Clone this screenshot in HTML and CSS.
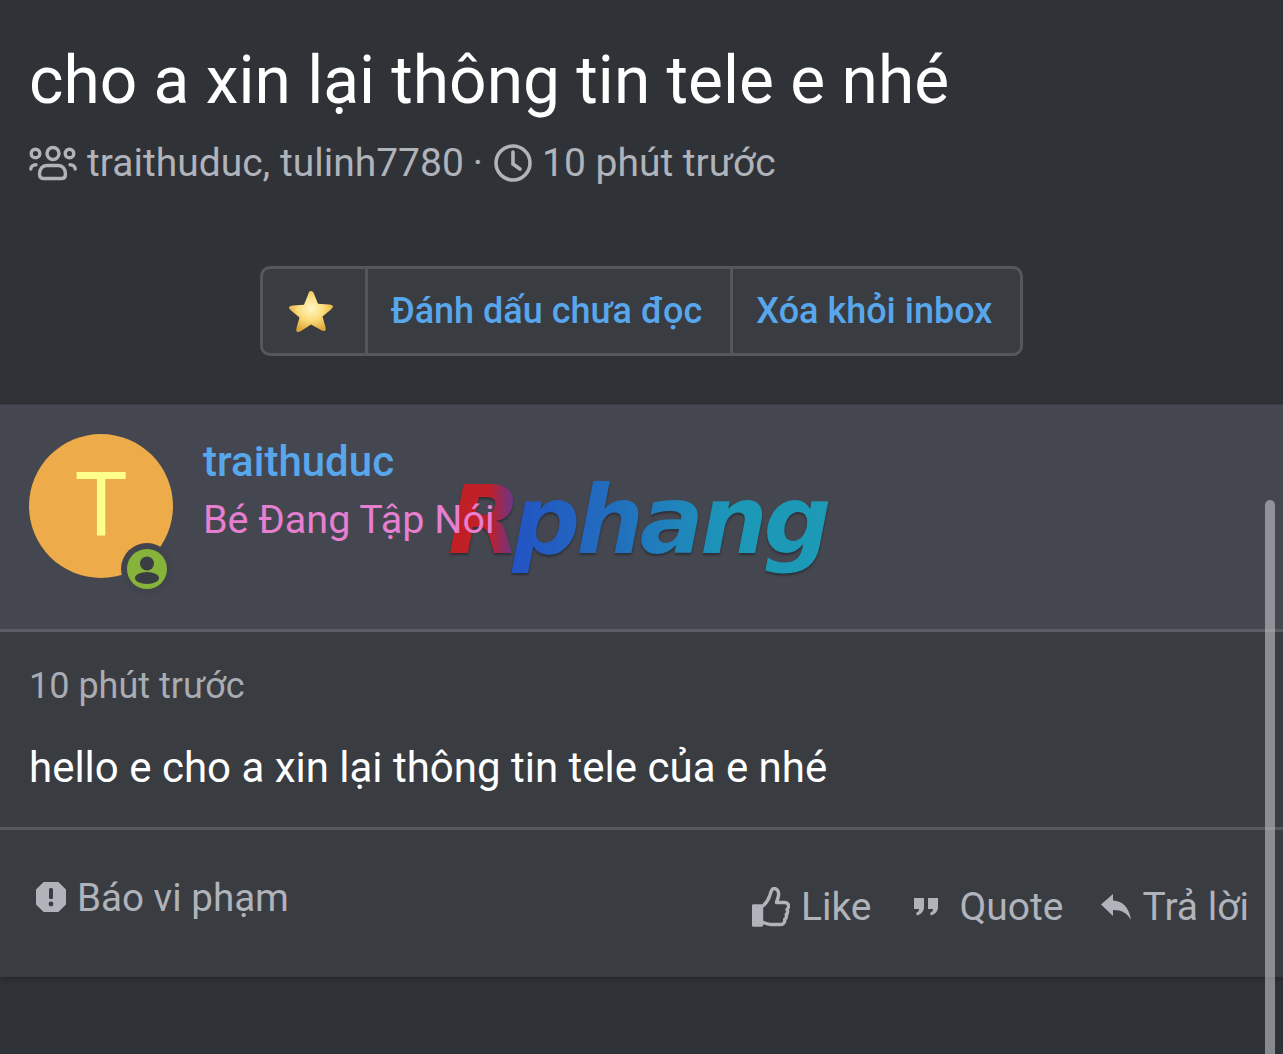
FILE: index.html
```html
<!DOCTYPE html>
<html lang="en">
<head>
  <meta charset="UTF-8">
  <meta name="viewport" content="width=device-width, initial-scale=1.0">
  <title>cho a xin lại thông tin tele e nhé</title>
  <link rel="stylesheet" href="styles.css">
</head>
<body>
  <!-- Thread heading -->
  <div class="thread-head">
    <h1>cho a xin lại thông tin tele e nhé</h1>
    <div class="thread-meta">
      <svg class="icon-users" viewBox="0 0 48 36" fill="none" stroke="currentColor" stroke-width="3.4" stroke-linecap="round">
        <circle cx="6.5" cy="8.5" r="4.3"/>
        <circle cx="24" cy="8.5" r="6"/>
        <circle cx="40.5" cy="8.5" r="4.3"/>
        <path d="M1.800 24c0-2.500 2-4.200 5.200-4.200"/>
        <path d="M46.200 24c0-2.500-2-4.200-5.200-4.200"/>
        <path d="M10.500 29c0-5 3-8.500 7-8.500h12c4 0 7 3.500 7 8.500 0 3-1.500 4.500-3.500 4.500H14c-2 0-3.500-1.500-3.500-4.500z"/>
      </svg>
      <span>traithuduc, tulinh7780</span>
      <span class="dot">·</span>
      <svg class="icon-clock" viewBox="0 0 38 38" fill="none" stroke="currentColor" stroke-width="3.6" stroke-linecap="round">
        <circle cx="19" cy="19" r="17"/>
        <path d="M19 8v12l7 5"/>
      </svg>
      <span>10 phút trước</span>
    </div>
  </div>

  <!-- Thread actions -->
  <div class="actions">
    <div class="btn-group">
      <a class="btn btn-star">
        <svg viewBox="0 0 46 44" class="icon-star">
          <defs>
            <radialGradient id="starFill" cx="50%" cy="42%" r="60%">
              <stop offset="0" stop-color="#fff6c8"/>
              <stop offset="0.5" stop-color="#fbdc78"/>
              <stop offset="1" stop-color="#dda135"/>
            </radialGradient>
          </defs>
          <path d="M23 2c1.500 0 2.300 1 3 2.800l4 10 11 .8c2.500.2 4 .8 4 2 0 1-.8 1.800-2 2.800l-8.500 7 3 10.500c.5 2 .3 3.500-1 4-1 .4-2.200-.2-3.500-1L23 35.500 13 41.900c-1.300.8-2.500 1.400-3.500 1-1.300-.5-1.500-2-1-4l3-10.500-8.500-7c-1.200-1-2-1.800-2-2.800 0-1.200 1.500-1.800 4-2l11-.8 4-10C20.700 3 21.500 2 23 2z" fill="url(#starFill)"/>
        </svg>
      </a>
      <a class="btn btn-mark">Đánh dấu chưa đọc</a>
      <a class="btn btn-last">Xóa khỏi inbox</a>
    </div>
  </div>

  <!-- Message -->
  <div class="post">
    <div class="post-user">
      <div class="avatar">
        T
        <span class="avatar-badge">
          <svg viewBox="0 0 40 40">
            <circle cx="20" cy="20" r="20" fill="#86b43a"/>
            <circle cx="20" cy="14.500" r="7" fill="#3a3d43"/>
            <ellipse cx="20" cy="29" rx="12" ry="6" fill="#3a3d43"/>
          </svg>
        </span>
      </div>
      <div class="user-info">
        <a class="username">traithuduc</a>
        <div class="user-title">Bé Đang Tập Nói</div>
      </div>
    </div>

    <div class="post-body">
      <div class="post-date">10 phút trước</div>
      <div class="post-text">hello e cho a xin lại thông tin tele của e nhé</div>
    </div>

    <div class="post-foot">
      <a class="report">
        <svg class="icon-report" viewBox="0 0 30 30">
          <path d="M9 0h12l9 9v12l-9 9H9l-9-9V9z" fill="currentColor" stroke="currentColor" stroke-width="2" stroke-linejoin="round"/>
          <rect x="13" y="6" width="4" height="11" rx="1.500" fill="#393c41"/>
          <circle cx="15" cy="22" r="2.400" fill="#393c41"/>
        </svg>
        Báo vi phạm
      </a>
      <div class="post-links">
        <a class="post-link">
          <svg class="icon-like" viewBox="0 0 38 40" fill="none" stroke="currentColor" stroke-width="3.4" stroke-linejoin="round" stroke-linecap="round">
            <path d="M1.500 19h8v19h-8z" fill="currentColor"/>
            <path d="M9.500 20c4-3 7-7 8.500-12 .8-3 1.500-6.500 4-6.500 3.500 0 5 3.500 4.500 7-.3 2.500-1.500 5-2 7h8c3 0 4.500 2 4 4.500-.2 1.200-1 2-1.500 2.500 1 1.500.8 4-.8 5 .6 2 0 4-1.500 5 .3 2.500-1.200 5-4 5H19c-3 0-6-1.500-9.500-2.500"/>
          </svg>
          Like
        </a>
        <a class="post-link link-quote">
          <svg class="icon-quote" viewBox="0 0 24 18" fill="currentColor">
            <path d="M0 0h10v9c0 4-3 7.500-7 8.500l-1-2.500c2-.8 3-2 3.200-4H0z"/>
            <path d="M14 0h10v9c0 4-3 7.500-7 8.500l-1-2.500c2-.8 3-2 3.200-4H14z"/>
          </svg>
          Quote
        </a>
        <a class="post-link">
          <svg class="icon-reply" viewBox="0 0 30 26" fill="currentColor">
            <path d="M0 10.500 12 0v6.500c10 .5 16 7 18 19.500-4-7-9-10-18-10v6z"/>
          </svg>
          Trả lời
        </a>
      </div>
    </div>
  </div>

  <!-- Overlays -->
  <div class="watermark"><span class="wm-r">R</span><span class="wm-rest">phang</span></div>
  <div class="scrollbar"></div>
</body>
</html>
```

FILE: styles.css
```css
html, body {
  margin: 0;
  padding: 0;
}

body {
  position: relative;
  height: 1054px;
  overflow: hidden;
  background: #2f3237;
  color: #fff;
  font-family: Roboto, "Liberation Sans", sans-serif;
}

a {
  text-decoration: none;
}

/* Thread heading */
.thread-head {
  padding: 41px 29px 0;
}

.thread-head h1 {
  margin: 0;
  font-size: 65.85px;
  line-height: 80px;
  font-weight: 400;
}

.thread-meta {
  display: flex;
  align-items: center;
  margin-top: 9px;
  height: 66px;
  font-size: 39px;
  color: #b0b3ba;
}

.icon-users {
  width: 48px;
  height: 36px;
  margin-right: 10px;
}

.dot {
  margin: 0 11px 0 9px;
}

.icon-clock {
  width: 38px;
  height: 38px;
  margin-right: 10px;
}

/* Thread actions */
.actions {
  display: flex;
  justify-content: center;
  margin-top: 70px;
}

.btn-group {
  display: flex;
  height: 90px;
  box-sizing: border-box;
  border: 3px solid #54575d;
  border-radius: 10px;
  background: #393c41;
}

.btn {
  display: flex;
  align-items: center;
  font-size: 36px;
  font-weight: 500;
  color: #58a6ec;
  border-left: 3px solid #54575d;
}

.btn-star {
  border-left: none;
  padding: 0 31px 0 25px;
}

.btn-mark {
  padding: 0 28px 0 23px;
}

.btn-last {
  padding: 0 28px 0 23px;
}

.icon-star {
  width: 46px;
  height: 44px;
}

/* Message */
.post {
  margin-top: 48px;
  background: #393c41;
  border-top: 1px solid #3a3d43;
  box-shadow: 0 2px 6px rgba(0, 0, 0, 0.25);
}

.post-user {
  display: flex;
  height: 227px;
  box-sizing: border-box;
  padding: 29px 29px 0;
  background: #44474f;
  border-bottom: 3px solid #5a5d63;
}

.avatar {
  position: relative;
  width: 144px;
  height: 144px;
  border-radius: 50%;
  background: #edab49;
  color: #ffff8c;
  font-size: 89px;
  line-height: 144px;
  text-align: center;
  flex-shrink: 0;
}

.avatar-badge {
  position: absolute;
  right: 0;
  bottom: -17px;
  width: 40px;
  height: 40px;
  padding: 6px;
  border-radius: 50%;
  background: #41444c;
  display: flex;
}

.avatar-badge svg {
  width: 40px;
  height: 40px;
}

/* stays above the watermark, the last word of the title runs over the logo */
.user-info {
  position: relative;
  z-index: 1;
  margin-left: 30px;
}

.username {
  display: block;
  margin-top: 3px;
  font-size: 42px;
  line-height: 50px;
  font-weight: 500;
  color: #58a6ec;
}

.user-title {
  margin-top: 8px;
  font-size: 39.5px;
  line-height: 50px;
  color: #e77fd0;
}

.post-body {
  height: 198px;
  box-sizing: border-box;
  padding: 32px 29px 0;
  border-bottom: 3px solid #55585e;
}

.post-date {
  font-size: 36px;
  line-height: 44px;
  color: #a9acb3;
}

.post-text {
  margin-top: 35px;
  font-size: 42px;
  line-height: 50px;
}

.post-foot {
  display: flex;
  justify-content: space-between;
  height: 147px;
  box-sizing: border-box;
  padding: 42px 34px 0 36px;
  color: #b0b3ba;
  font-size: 39px;
}

.report {
  display: flex;
  align-items: center;
  height: 50px;
  font-size: 38.6px;
  color: #b0b3ba;
}

.icon-report {
  width: 30px;
  height: 30px;
  margin-right: 11px;
}

.post-links {
  display: flex;
  margin-top: 10px;
  gap: 37px;
}

.post-link {
  display: flex;
  align-items: center;
  height: 50px;
  color: #b0b3ba;
}

.icon-like {
  width: 38px;
  height: 40px;
  margin-right: 11px;
}

.icon-quote {
  width: 24px;
  height: 18px;
  margin-right: 22px;
}

.link-quote {
  margin-left: 5px;
}

.icon-reply {
  width: 30px;
  height: 26px;
  margin-right: 12px;
}

/* Watermark sits over the user row */
.watermark {
  position: absolute;
  left: 448px;
  top: 460px;
  font-family: "DejaVu Sans", sans-serif;
  font-size: 95px;
  line-height: 120px;
  font-weight: 700;
  font-style: italic;
  letter-spacing: -4px;
  white-space: nowrap;
  filter: drop-shadow(0 2px 1px rgba(30, 30, 40, 0.6));
}

.wm-r {
  margin-right: -5px;
  color: transparent;
  background: linear-gradient(90deg, #c21f25 0, #bf2029 60%, #5a3a96 100%);
  -webkit-background-clip: text;
  background-clip: text;
}

.wm-rest {
  color: transparent;
  background: linear-gradient(90deg, #2353c4 0, #2171bd 35%, #1d98b8 70%, #1c9ab6 100%);
  -webkit-background-clip: text;
  background-clip: text;
}

.scrollbar {
  position: absolute;
  left: 1265px;
  top: 500px;
  width: 10px;
  height: 554px;
  border-radius: 5px 5px 0 0;
  background: rgba(190, 192, 196, 0.62);
}
```
